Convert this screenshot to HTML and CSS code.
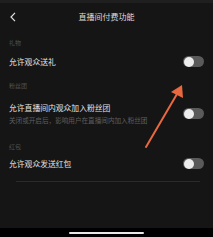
FILE: index.html
```html
<!DOCTYPE html>
<html lang="zh">
<head>
<meta charset="utf-8">
<link rel="stylesheet" href="styles.css">
</head>
<body>
<div class="app">
  <div class="topline"></div>
  <header class="header">
    <svg class="back" width="6" height="10" viewBox="0 0 6 10"><path d="M5 0.8 L1 5 L5 9.2" fill="none" stroke="#e0e0e0" stroke-width="1.2"/></svg>
    <div class="title">直播间付费功能</div>
    <div></div>
  </header>
  <main class="content">
    <div class="label first">礼物</div>
    <div class="row single">
      <div class="text">允许观众送礼</div>
      <div class="toggle"><span class="knob"></span></div>
    </div>
    <div class="label second">粉丝团</div>
    <div class="row double">
      <div class="texts">
        <div class="text">允许直播间内观众加入粉丝团</div>
        <div class="sub">关闭或开启后，影响用户在直播间内加入粉丝团</div>
      </div>
      <div class="toggle"><span class="knob"></span></div>
    </div>
    <div class="label third">红包</div>
    <div class="row single last">
      <div class="text">允许观众发送红包</div>
      <div class="toggle"><span class="knob"></span></div>
    </div>
    <div class="divider"></div>
  </main>
  <div class="homebar"><span class="indicator"></span></div>
  <svg class="arrow" width="213" height="237" viewBox="0 0 213 237">
    <line x1="146" y1="147" x2="177" y2="94" stroke="#e8683f" stroke-width="2" stroke-linecap="round"/>
    <polygon points="182,85 183,98 171,92" fill="#e8683f"/>
  </svg>
</div>
</body>
</html>
```
FILE: styles.css
```css
html, body {
  margin: 0;
  padding: 0;
  background: #000;
}
body {
  font-family: "Noto Sans CJK SC", "Noto Sans", sans-serif;
}
.app {
  position: relative;
  width: 213px;
  height: 237px;
  display: flex;
  flex-direction: column;
  background: #151515;
  overflow: hidden;
}
.topline {
  height: 3px;
  background: #1f1f1f;
}
.header {
  height: 28px;
  display: grid;
  grid-template-columns: 30px 1fr 30px;
  align-items: center;
}
.back {
  margin-left: 10px;
}
.title {
  text-align: center;
  font-size: 8px;
  line-height: 10px;
  color: #dcdcdc;
}
.content {
  flex: 1;
  display: flex;
  flex-direction: column;
}
.label {
  font-size: 6px;
  line-height: 10px;
  color: #4f4f4f;
  padding: 0 9px;
}
.label.first {
  margin-top: 7px;
}
.label.second {
  margin-top: 9px;
}
.label.third {
  margin-top: 18px;
}
.row {
  display: flex;
  align-items: center;
  justify-content: space-between;
  padding: 0 9px;
}
.row.single {
  padding-top: 8px;
  padding-bottom: 5px;
}
.row.single.last {
  padding-top: 6px;
}
.row.double {
  padding-top: 12px;
}
.text {
  font-size: 7.8px;
  line-height: 10px;
  color: #e4e4e4;
}
.sub {
  font-size: 6.6px;
  line-height: 8px;
  margin-top: 3px;
  color: #5e5e5e;
  white-space: nowrap;
}
.toggle {
  width: 21px;
  height: 11px;
  border-radius: 6px;
  background: #5a5a5a;
  display: flex;
  align-items: center;
  padding-left: 1px;
  box-sizing: border-box;
}
.knob {
  width: 10px;
  height: 10px;
  border-radius: 50%;
  background: #ededed;
}
.divider {
  height: 1px;
  background: #2a2a2a;
  margin: 7px 13px 0 16px;
}
.homebar {
  height: 9px;
  background: #000;
  display: flex;
  justify-content: center;
  padding-top: 4px;
  box-sizing: border-box;
}
.indicator {
  width: 75px;
  height: 2px;
  border-radius: 1px;
  background: #e8e8e8;
}
.arrow {
  position: absolute;
  left: 0;
  top: 0;
  pointer-events: none;
}
```
